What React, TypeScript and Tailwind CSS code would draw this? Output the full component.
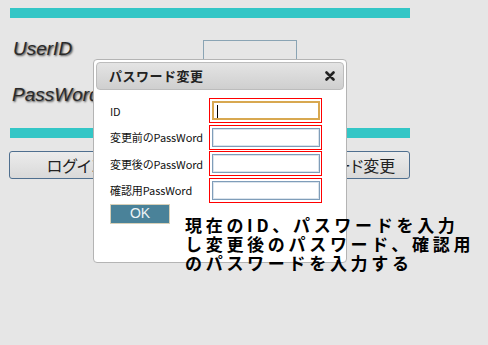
import React from "react";

const jp = "font-['Noto_Sans_CJK_JP','Noto_Sans',sans-serif]";

function Field({ focused }: { focused?: boolean }) {
  return (
    <div className="h-[25px] w-[113px] shrink-0 border border-[#ff0000] p-[2px] pr-[1px]">
      <div
        className={
          focused
            ? "relative h-full w-full border-2 border-[#d8a850] bg-white"
            : "h-full w-full border border-[#7f9db9] bg-white shadow-[inset_0_0_0_1px_#dbe4ec]"
        }
      >
        {focused && <div className="absolute left-[3px] top-[2px] h-[13px] w-[1px] bg-black" />}
      </div>
    </div>
  );
}

export default function App() {
  const rows = [
    { label: "ID", focused: true },
    { label: "変更前のPassWord" },
    { label: "変更後のPassWord" },
    { label: "確認用PassWord" },
  ];
  return (
    <div className="relative h-[345px] w-[488px] overflow-hidden bg-[#e6e6e6]">
      <div className="pl-[10px] pt-[8px]">
        <div className="h-[10px] w-[400px] bg-[#33c6c6]" />
        <div className="mt-[22px] flex h-[24px]">
          <div className="w-[193px] pl-[3px] font-['Liberation_Sans',Arial,sans-serif] text-[19px] italic leading-[18px] text-[#2a2a2a] [text-shadow:1px_1px_2px_#444]">
            UserID
          </div>
          <div className="h-[24px] w-[94px] border border-[#8aa4b4]" />
        </div>
        <div className="mt-[22px] flex h-[24px]">
          <div className="w-[193px] pl-[2px] font-['Liberation_Sans',Arial,sans-serif] text-[19px] italic leading-[18px] text-[#2a2a2a] [text-shadow:1px_1px_2px_#444]">
            PassWord
          </div>
          <div className="h-[24px] w-[94px] border border-[#8aa4b4]" />
        </div>
        <div className="mt-[18px] h-[10px] w-[400px] bg-[#33c6c6]" />
        <div className={`-ml-[1px] mt-[13px] flex h-[28px] w-[401px] ${jp}`}>
          {["ログイン", "", "パスワード変更"].map((t, i) => (
            <button
              key={i}
              className="flex h-full flex-1 items-center justify-center rounded-[3px] border border-[#4f6f8f] bg-gradient-to-b from-[#ececec] to-[#d9d9d9] text-[16px] text-[#222] [font-feature-settings:'palt']"
            >
              {t}
            </button>
          ))}
        </div>
      </div>

      {/* dialog */}
      <div className={`absolute left-[93px] top-[59px] h-[204px] w-[254px] rounded-[4px] border border-[#b4b4b4] bg-white p-[2px] ${jp}`}>
        <div className="flex h-[28px] items-center justify-between rounded-[4px] border border-[#bcbcbc] bg-gradient-to-b from-[#e4e4e4] to-[#cfcfcf] pl-[12px] pr-[8px]">
          <span className="text-[13px] font-bold tracking-[0.5px] text-[#222]">パスワード変更</span>
          <svg width="10" height="10" viewBox="0 0 10 10">
            <path d="M1.5 1.5 L8.5 8.5 M8.5 1.5 L1.5 8.5" stroke="#222" strokeWidth="2.6" strokeLinecap="round" />
          </svg>
        </div>
        <div className="pl-[14px] pt-[8px]">
          <div className="flex flex-col gap-[1.5px]">
            {rows.map((r) => (
              <div key={r.label} className="flex h-[25px] items-center">
                <div className="w-[99px] shrink-0 whitespace-nowrap text-[11px] leading-[14px] tracking-[-0.1px] text-[#111]">
                  {r.label}
                </div>
                <Field focused={r.focused} />
              </div>
            ))}
          </div>
          <div className="mt-[1px] flex h-[20px] w-[60px] items-center justify-center border border-[#d8d0b8] bg-[#4a8299] font-['Liberation_Sans',Arial,sans-serif] text-[14px] text-[#eef4f6]">
            OK
          </div>
        </div>
      </div>

      {/* annotation */}
      <div className={`absolute left-[185px] top-[215px] whitespace-nowrap text-[17px] font-bold leading-[19px] tracking-[3.7px] text-black ${jp}`}>
        <div>現在のID、パスワードを入力</div>
        <div>し変更後のパスワード、確認用</div>
        <div>のパスワードを入力する</div>
      </div>
    </div>
  );
}
